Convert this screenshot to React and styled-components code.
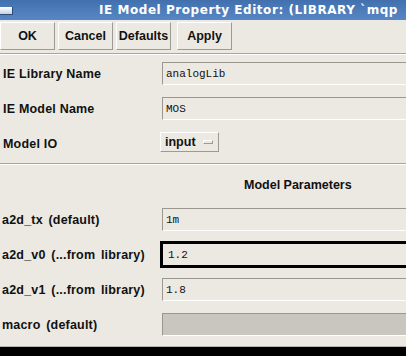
import React from "react";
import styled, { createGlobalStyle } from "styled-components";

const Global = createGlobalStyle`
  html, body {
    margin: 0;
    padding: 0;
    background: #000;
    overflow: hidden;
  }
`;

const Window = styled.div`
  display: flex;
  flex-direction: column;
  width: 406px;
  height: 356px;
  overflow: hidden;
  background: #ece9e3;
  font-family: "Liberation Sans", Arial, sans-serif;
`;

const TitleBar = styled.div`
  display: flex;
  align-items: center;
  flex: 0 0 20px;
  background: linear-gradient(#4270ae, #5687c4);
  white-space: nowrap;
  overflow: hidden;
`;

const WinIcon = styled.div`
  flex: 0 0 12px;
  height: 7px;
  margin-top: 1px;
  background: linear-gradient(#ffffff, #c8d2df);
  border-right: 1px solid #2c4d7c;
  border-bottom: 1px solid #2c4d7c;
`;

const Title = styled.div`
  margin-left: 86px;
  font-family: "DejaVu Sans", sans-serif;
  font-weight: bold;
  font-size: 12px;
  letter-spacing: 0.55px;
  color: #fff;
`;

const Toolbar = styled.div`
  display: flex;
  align-items: center;
  gap: 3px;
  flex: 0 0 34px;
  box-sizing: border-box;
  padding: 0 0 1px;
  border-bottom: 1px solid #a9a59e;
  box-shadow: 0 1px 0 #fff;
`;

const Button = styled.button`
  width: 55px;
  height: 28px;
  margin-left: ${(p) => p.ml || 0}px;
  padding: 0;
  box-sizing: border-box;
  background: #ece9e3;
  border: 1px solid;
  border-color: #fff #9d9a94 #9d9a94 #fff;
  font-family: "Liberation Sans", Arial, sans-serif;
  font-weight: bold;
  font-size: 12.5px;
  color: #111;
`;

const Form = styled.div`
  display: flex;
  flex-direction: column;
  padding-top: 2px;
`;

const Row = styled.div`
  display: grid;
  grid-template-columns: 160px 1fr;
  align-items: center;
  height: ${(p) => p.h || 35}px;
`;

const Label = styled.div`
  padding-left: ${(p) => (p.param ? 2 : 3)}px;
  font-weight: bold;
  font-size: 12.5px;
  letter-spacing: 0.2px;
  word-spacing: ${(p) => (p.param ? 2 : 0)}px;
  color: #111;
  white-space: nowrap;
`;

const Field = styled.div`
  display: flex;
  align-items: center;
  height: 23px;
  box-sizing: border-box;
  margin-left: 2px;
  margin-right: -10px;
  padding-left: 3px;
  background: ${(p) => (p.disabled ? "#c9c6c0" : "#ece9e3")};
  border: 1px solid;
  border-color: #9a9791 #fff #fff #9a9791;
  font-family: "Liberation Mono", "Courier New", monospace;
  font-size: 11px;
  color: #111;
`;

const FocusWrap = styled.div`
  border: 3px solid #000;
  margin-right: -10px;
  & > div {
    margin: 0;
    border-color: #ece9e3;
    height: 21px;
    padding-left: 4px;
  }
`;

const OptionMenu = styled.div`
  display: flex;
  align-items: center;
  justify-content: space-between;
  width: 59px;
  height: 20px;
  box-sizing: border-box;
  padding: 0 5px 0 4px;
  margin-top: -4px;
  border: 1px solid;
  border-color: #fff #9d9a94 #9d9a94 #fff;
  font-weight: bold;
  font-size: 12.5px;
  color: #111;
`;

const Indicator = styled.span`
  width: 8px;
  height: 2px;
  border: 1px solid;
  border-color: #fff #9d9a94 #9d9a94 #fff;
`;

const Separator = styled.div`
  height: 1px;
  margin-top: 1px;
  background: #a9a59e;
  box-shadow: 0 1px 0 #fff;
`;

const SectionHead = styled.div`
  height: 38px;
  line-height: 42px;
  padding-left: 244px;
  font-weight: bold;
  font-size: 12.5px;
  color: #111;
`;

const Bottom = styled.div`
  flex: 1;
  margin-top: 3px;
  border-top: 1px solid #ece9e3;
  box-shadow: inset 0 1px 0 #b8b4ad;
  background: #000;
`;

const params = [
  { label: "a2d_tx (default)", value: "1m" },
  { label: "a2d_v0 (...from library)", value: "1.2", focused: true },
  { label: "a2d_v1 (...from library)", value: "1.8" },
  { label: "macro (default)", value: "", disabled: true },
];

export default function App() {
  return (
    <>
      <Global />
      <Window>
        <TitleBar>
          <WinIcon />
          <Title>IE Model Property Editor: (LIBRARY `mqp</Title>
        </TitleBar>
        <Toolbar>
          <Button>OK</Button>
          <Button>Cancel</Button>
          <Button>Defaults</Button>
          <Button ml={3}>Apply</Button>
        </Toolbar>
        <Form>
          <Row>
            <Label>IE Library Name</Label>
            <Field>analogLib</Field>
          </Row>
          <Row>
            <Label>IE Model Name</Label>
            <Field>MOS</Field>
          </Row>
          <Row h={36}>
            <Label>Model IO</Label>
            <OptionMenu>
              input <Indicator />
            </OptionMenu>
          </Row>
          <Separator />
          <SectionHead>Model Parameters</SectionHead>
          {params.map((p) => (
            <Row key={p.label}>
              <Label param>{p.label}</Label>
              {p.focused ? (
                <FocusWrap>
                  <Field>{p.value}</Field>
                </FocusWrap>
              ) : (
                <Field disabled={p.disabled}>{p.value}</Field>
              )}
            </Row>
          ))}
        </Form>
        <Bottom />
      </Window>
    </>
  );
}
